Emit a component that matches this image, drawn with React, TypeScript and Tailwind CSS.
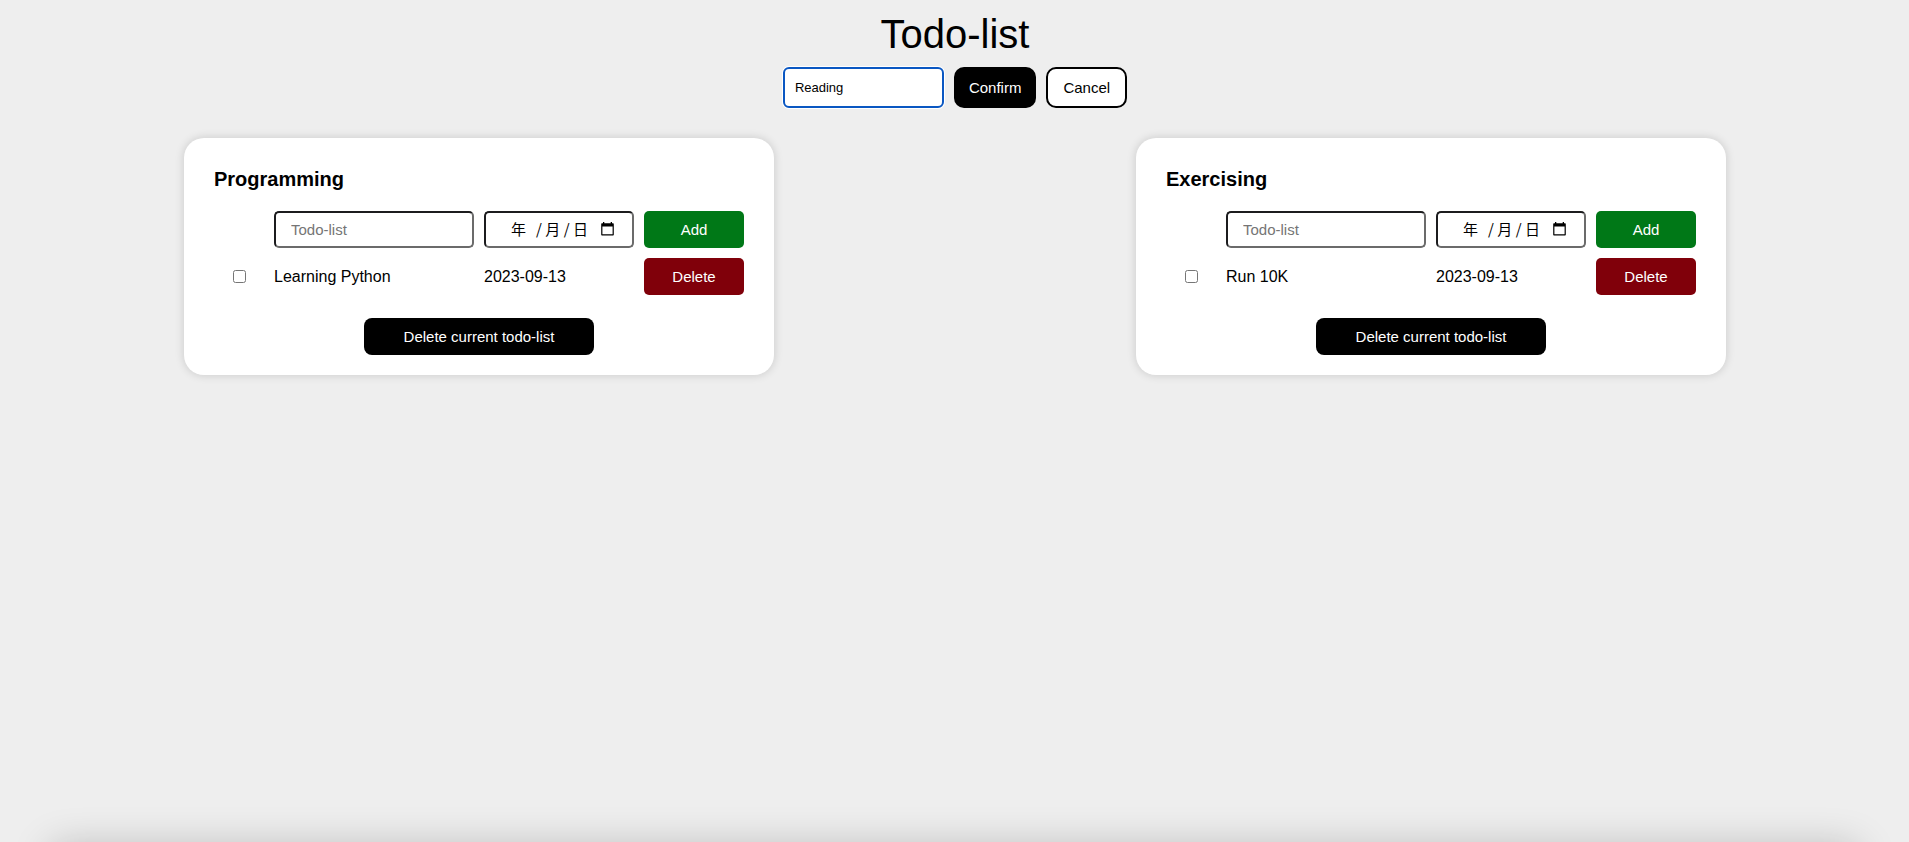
import { useState } from "react";

type Todo = { id: number; text: string; date: string };
type TodoList = { id: string; title: string; todos: Todo[] };

const lists: TodoList[] = [
  {
    id: "programming",
    title: "Programming",
    todos: [{ id: 1, text: "Learning Python", date: "2023-09-13" }],
  },
  {
    id: "exercising",
    title: "Exercising",
    todos: [{ id: 1, text: "Run 10K", date: "2023-09-13" }],
  },
];

const fieldBorder =
  "rounded-[5px] border-2 border-t-[#1c1c1e] border-l-[#1c1c1e] border-r-[#6b6b6b] border-b-[#6b6b6b] bg-white";

function CalendarIcon() {
  return (
    <svg viewBox="0 0 13 14" className="h-[14px] w-[13px]" fill="currentColor" aria-hidden="true">
      <path
        fillRule="evenodd"
        d="M2 0h1.300v1.200h6.400V0H11v1.200h.8c.6 0 1 .4 1 1v10.300c0 .6-.4 1-1 1H1.200c-.6 0-1-.4-1-1V2.200c0-.6.4-1 1-1H2V0zM1.400 4.600v7.700h10.200V4.600H1.400z"
      />
    </svg>
  );
}

function ListCard({ list }: { list: TodoList }) {
  const [date, setDate] = useState("年   / 月 / 日");

  return (
    <section className="rounded-[20px] bg-white px-[30px] pt-[29px] pb-5 shadow-[0_0_10px_rgba(0,0,0,0.16)]">
      <h2 className="text-xl leading-6 font-bold">{list.title}</h2>
      <div className="mt-5 grid grid-cols-[50px_200px_150px_100px] items-center gap-[10px]">
        <input
          type="text"
          aria-label={`New item for ${list.title}`}
          placeholder="Todo-list"
          className={`col-start-2 h-[37px] w-full px-[15px] text-[15px] placeholder:text-[#757575] ${fieldBorder}`}
        />
        <div className={`flex h-[37px] items-center pr-[18px] pb-0.5 pl-[25px] ${fieldBorder}`}>
          <input
            type="text"
            aria-label={`Date for ${list.title}`}
            value={date}
            onChange={(e) => setDate(e.target.value)}
            className="min-w-0 flex-1 font-['Noto_Sans_CJK_SC',sans-serif] text-[15px] leading-5 outline-none"
          />
          <button type="button" aria-label="Open calendar">
            <CalendarIcon />
          </button>
        </div>
        <button type="button" className="h-[37px] rounded-[5px] bg-[#007817] pt-0.5 text-[15px] text-white">
          Add
        </button>
      </div>
      <ul>
        {list.todos.map((todo) => (
          <li
            key={todo.id}
            className="mt-[10px] grid grid-cols-[50px_200px_150px_100px] items-center gap-[10px]"
          >
            <input id={`${list.id}-${todo.id}`} type="checkbox" className="size-[13px] justify-self-center" />
            <label htmlFor={`${list.id}-${todo.id}`}>{todo.text}</label>
            <time dateTime={todo.date}>{todo.date}</time>
            <button type="button" className="h-[37px] rounded-[5px] bg-[#80000a] pt-0.5 text-[15px] text-white">
              Delete
            </button>
          </li>
        ))}
      </ul>
      <div className="mt-[23px] flex justify-center">
        <button type="button" className="h-[37px] w-[230px] rounded-lg bg-black pt-0.5 text-[15px] text-white">
          Delete current todo-list
        </button>
      </div>
    </section>
  );
}

export default function App() {
  const [name, setName] = useState("Reading");

  return (
    <div className="relative min-h-screen overflow-hidden bg-[#eeeeee] pl-px font-['Liberation_Sans',Arial,sans-serif] text-base text-black">
      <header className="flex flex-col items-center pt-[11px]">
        <h1 className="text-[40px] leading-[46px]">Todo-list</h1>
        <form className="mt-[10px] flex gap-[10px]" onSubmit={(e) => e.preventDefault()}>
          <input
            type="text"
            aria-label="List name"
            value={name}
            onChange={(e) => setName(e.target.value)}
            className="h-[41px] w-[161px] rounded-[6px] border-2 border-[#0a57c2] bg-white px-[10px] text-[13px] ring-1 ring-white outline-none"
          />
          <button type="submit" className="rounded-[10px] bg-black px-[15px] pt-0.5 text-[15px] text-white">
            Confirm
          </button>
          <button type="button" className="rounded-[10px] border-2 border-black bg-white px-[15px] pt-0.5 text-[15px]">
            Cancel
          </button>
        </form>
      </header>
      <main className="mt-[30px] grid grid-cols-2 justify-items-center px-0.5">
        {lists.map((list) => (
          <ListCard key={list.id} list={list} />
        ))}
      </main>
      <div className="absolute inset-x-[52px] top-full h-20 shadow-[0_6px_40px_rgba(0,0,0,0.24)]" />
    </div>
  );
}
